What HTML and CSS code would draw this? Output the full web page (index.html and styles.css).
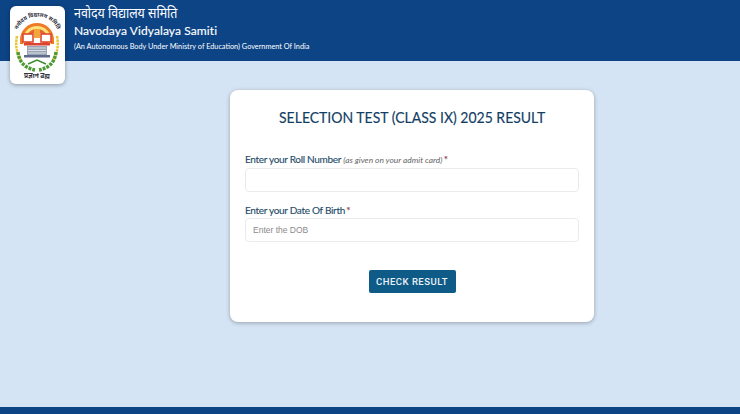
FILE: index.html
```html
<!DOCTYPE html>
<html lang="en">
<head>
<meta charset="utf-8">
<title>Navodaya Vidyalaya Samiti</title>
<link rel="stylesheet" href="styles.css">
</head>
<body>
<header class="topbar">
  <div class="logo">
    <svg class="emblem" viewBox="0 0 54 77" width="54" height="77" aria-hidden="true">
      <defs>
        <path id="arc" d="M6 32 A21 21 0 0 1 49 32"/>
      </defs>
      <text class="emblem-arc"><textPath href="#arc" startOffset="50%" text-anchor="middle">नवोदय विद्यालय समिति</textPath></text>
      <path d="M10 34 A17 17 0 0 1 44 34 L44 38 L10 38Z" fill="#ee7a24"/>
      <path d="M13 34 A14 14 0 0 1 41 34 L41 38 L13 38Z" fill="#fbe27a"/>
      <path d="M16 34 A11 11 0 0 1 38 34 L38 38 L16 38Z" fill="#e9632c"/>
      <path d="M21 32 A6 6 0 0 1 33 32 L33 38 L21 38Z" fill="#fff"/>
      <rect x="24" y="23" width="6" height="9" fill="#f0a63a"/>
      <rect x="13" y="28" width="10" height="8" fill="#fff" stroke="#e2492f" stroke-width="1.6"/>
      <rect x="31" y="28" width="10" height="8" fill="#fff" stroke="#e2492f" stroke-width="1.6"/>
      <rect x="14" y="37" width="26" height="2.5" fill="#d9432f"/>
      <rect x="17" y="40" width="20" height="9" fill="#98a3b3"/>
      <path d="M18 42h18M18 44.500h18M18 47h18" stroke="#eef1f6" stroke-width=".8"/>
      <rect x="14" y="49" width="26" height="2.500" fill="#5f6b8a"/>
      <path d="M7 30 C5 40 7 48 11 54" fill="none" stroke="#e8c536" stroke-width="2.500" stroke-dasharray="2.500 .8"/>
      <path d="M47 30 C49 40 47 48 43 54" fill="none" stroke="#e8c536" stroke-width="2.500" stroke-dasharray="2.500 .8"/>
      <path d="M8 46 C9 56 15 62 25 64" fill="none" stroke="#4d9a36" stroke-width="3.500" stroke-dasharray="3 1"/>
      <path d="M46 46 C45 56 39 62 29 64" fill="none" stroke="#4d9a36" stroke-width="3.500" stroke-dasharray="3 1"/>
      <path d="M18 58 L27 54 L36 58" fill="none" stroke="#3f8a2e" stroke-width="1.500"/>
      <text class="emblem-motto" x="27" y="72" text-anchor="middle">प्रज्ञानं ब्रह्म</text>
    </svg>
  </div>
  <div class="brand">
    <div class="brand-hi"><span class="squeeze-hi">नवोदय विद्यालय समिति</span></div>
    <div class="brand-en">Navodaya Vidyalaya Samiti</div>
    <div class="brand-sub">(An Autonomous Body Under Ministry of Education) Government Of India</div>
  </div>
</header>
<main class="content">
  <form class="card">
    <h1 class="title"><span class="squeeze-title">SELECTION TEST (CLASS IX) 2025 RESULT</span></h1>
    <div class="field">
      <label class="label" for="roll">Enter your Roll Number <em class="hint">(as given on your admit card)</em> <span class="req">*</span></label>
      <input class="input" id="roll" type="text">
    </div>
    <div class="field">
      <label class="label" for="dob">Enter your Date Of Birth <span class="req">*</span></label>
      <input class="input" id="dob" type="text" placeholder="Enter the DOB">
    </div>
    <div class="actions"><button class="btn" type="button">CHECK RESULT</button></div>
  </form>
</main>
<footer class="footbar"></footer>
</body>
</html>
```
FILE: styles.css
```css
* { box-sizing: border-box; }
html, body { margin: 0; height: 100%; }
body {
  display: flex;
  flex-direction: column;
  height: 414px;
  overflow: hidden;
  background: #d5e4f4;
  font-family: Lato, "Liberation Sans", sans-serif;
}
.topbar {
  position: relative;
  height: 61px;
  flex: none;
  background: #0d4486;
  padding: 4px 0 0 74px;
  color: #fff;
}
.logo {
  position: absolute;
  left: 10px;
  top: 6px;
  width: 55px;
  height: 78px;
  background: #fff;
  border-radius: 6px;
  box-shadow: 0 1px 4px rgba(0, 0, 0, .35);
}
.emblem { display: block; }
.emblem-arc { font-family: "Noto Sans", "DejaVu Sans", sans-serif; font-size: 5.500px; font-weight: 700; fill: #2f2f3d; }
.emblem-motto { font-family: "Noto Sans", "DejaVu Sans", sans-serif; font-size: 6.500px; font-weight: 700; fill: #2f2f3d; }
.brand-hi { font-size: 14px; line-height: 17px; font-family: "Noto Sans", "DejaVu Sans", sans-serif; }
.squeeze-hi { display: inline-block; transform: scaleX(.887); transform-origin: left center; white-space: nowrap; }
.brand-en { font-size: 12px; line-height: 15px; margin-top: 2px; letter-spacing: .1px; -webkit-text-stroke: .15px #fff; }
.brand-sub { font-size: 7.300px; line-height: 10px; margin-top: 4px; }
.content {
  flex: 1;
  display: flex;
  justify-content: center;
  align-items: flex-start;
  padding: 29px 0 0 84px;
}
.card {
  width: 364px;
  height: 232px;
  background: #fff;
  border-radius: 8px;
  box-shadow: 0 1px 4px rgba(0, 0, 0, .3);
  padding: 17px 15px 0;
}
.title {
  margin: 0 0 27px;
  text-align: center;
  font-size: 16px;
  line-height: 19px;
  font-weight: 400;
  color: #123e63;
  -webkit-text-stroke: .15px #123e63;
}
.squeeze-title { display: inline-block; transform: scaleX(.875); white-space: nowrap; }
.field { margin-bottom: 12px; }
.label {
  display: block;
  font-size: 10px;
  line-height: 13px;
  margin-bottom: 1px;
  color: #1c4a68;
  letter-spacing: -.3px;
  -webkit-text-stroke: .12px #1c4a68;
}
.hint { font-size: 8.400px; color: #666; letter-spacing: 0; -webkit-text-stroke: 0; }
.req { color: #c92a2a; margin-left: -1px; }
.input {
  display: block;
  width: 100%;
  height: 24px;
  border: 1px solid #e8ecef;
  border-radius: 4px;
  padding: 0 7px;
  background: #fff;
  font-family: "Liberation Sans", sans-serif;
  font-size: 8.500px;
  color: #333;
}
.input::placeholder { color: #8a8a8a; opacity: 1; }
.actions { display: flex; justify-content: center; margin-top: 28px; }
.btn {
  width: 87px;
  height: 23px;
  border: 0;
  border-radius: 2px;
  background: #0f5b87;
  color: #eaf2f8;
  font-family: Roboto, "Liberation Sans", sans-serif;
  font-size: 9.500px;
  font-weight: 500;
  letter-spacing: .5px;
  padding: 0;
}
.footbar { height: 7px; flex: none; background: #0d4486; }
```
